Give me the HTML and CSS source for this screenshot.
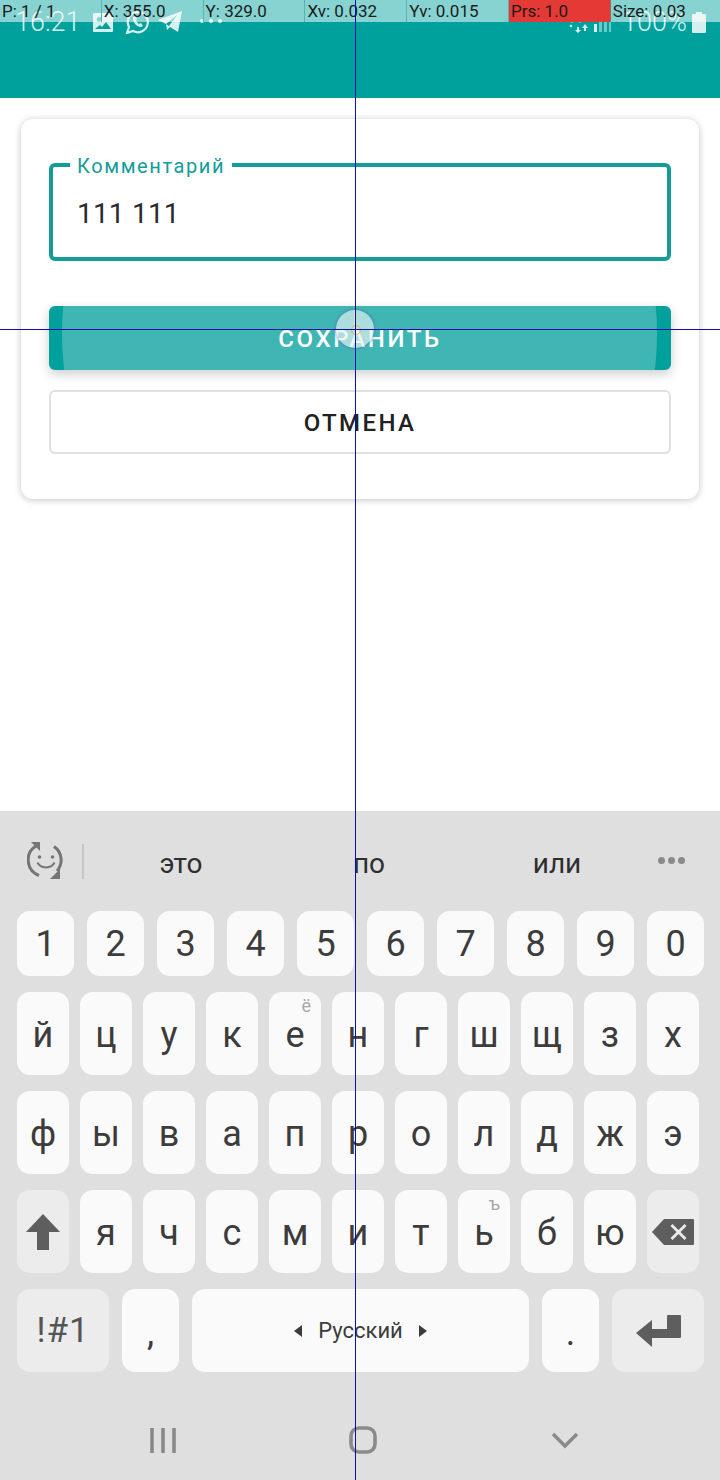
FILE: index.html
```html
<!DOCTYPE html>
<html lang="ru">
<head>
  <meta charset="utf-8"/>
  <link rel="stylesheet" href="styles.css">
</head>
<body>
  <div class="screen">
    <header class="app-header">
      <div class="status-bar">
        <span class="clock">16:21</span>
        <svg class="st-icon st-pic" viewBox="0 0 20 19"><path d="M1 0h18a1 1 0 0 1 1 1v17a1 1 0 0 1-1 1H1a1 1 0 0 1-1-1V1a1 1 0 0 1 1-1zm5 4a2.400 2.400 0 1 0 0 4.800A2.400 2.400 0 0 0 6 4zM2 16h16l-5-7-4 5-2-2z" fill-rule="evenodd"/></svg>
        <svg class="st-icon st-wa" viewBox="0 0 24 24"><path class="st-line" d="M2 23l2-6a10 10 0 1 1 4 4z"/><path d="M8 7l2-1 2 3-1 2 3 3 2-1 2 3-2 1c-4 0-9-5-8-10z"/></svg>
        <svg class="st-icon st-tg" viewBox="0 0 24 22"><path d="M24 0l-4 21-8-5-3 3-1-6L0 9zM8 13l11-9-8 11z" fill-rule="evenodd"/></svg>
        <span class="st-dots"><i></i><i></i><i></i></span>
        <span class="st-spacer"></span>
        <svg class="st-icon st-wifi" viewBox="0 0 22 21"><path class="st-line" d="M1 7a13 13 0 0 1 18 0M5 10a8 8 0 0 1 10 0"/><circle cx="5" cy="14" r="1.300"/><path d="M11 15h2v3h2l-3 3-3-3h2zM18 19h2v-3h2l-3-4-3 4h2z"/></svg>
        <svg class="st-icon st-signal" viewBox="0 0 18 20"><rect x="0" y="11" width="3" height="8"/><rect class="st-dim" x="5" y="8" width="3" height="11"/><rect class="st-dim" x="10" y="4" width="3" height="15"/><rect class="st-dim" x="15" y="1" width="2" height="18"/></svg>
        <span class="battery-text">100%</span>
        <svg class="st-icon st-batt" viewBox="0 0 14 21"><path d="M4 0h6v2h3a1 1 0 0 1 1 1v17a1 1 0 0 1-1 1H1a1 1 0 0 1-1-1V3a1 1 0 0 1 1-1h3z"/></svg>
      </div>
    </header>

    <main class="content">
      <section class="card">
        <div class="field">
          <span class="field-label">Комментарий</span>
          <span class="field-value">111 111</span>
        </div>
        <button class="btn btn-save"><span class="ripple"></span><span class="btn-text">СОХРАНИТЬ</span></button>
        <button class="btn btn-cancel"><span class="btn-text">ОТМЕНА</span></button>
      </section>
    </main>

    <section class="keyboard">
      <div class="suggestions">
        <svg class="sg-icon" viewBox="0 0 38 38">
          <path class="sg-line" d="M9 4A16.500 16.500 0 0 0 12 33.500M27 4.500A16.500 16.500 0 0 1 30 29"/>
          <path class="sg-fill" d="M4 0h9v9zM33 27v10h-10z"/>
          <circle class="sg-fill" cx="12.500" cy="15" r="1.800"/>
          <circle class="sg-fill" cx="25.500" cy="15" r="1.800"/>
          <path class="sg-thin" d="M10.500 20.500c3 6.500 14 6.500 17 0"/>
        </svg>
        <span class="sg-divider"></span>
        <span class="sg-word">это</span>
        <span class="sg-word">по</span>
        <span class="sg-word">или</span>
        <span class="sg-dots"><i></i><i></i><i></i></span>
      </div>

      <div class="key-row">
        <span class="key key-num">1</span><span class="key key-num">2</span><span class="key key-num">3</span><span class="key key-num">4</span><span class="key key-num">5</span><span class="key key-num">6</span><span class="key key-num">7</span><span class="key key-num">8</span><span class="key key-num">9</span><span class="key key-num">0</span>
      </div>
      <div class="key-row row-letters">
        <span class="key">й</span><span class="key">ц</span><span class="key">у</span><span class="key">к</span><span class="key">е<em class="hint">ё</em></span><span class="key">н</span><span class="key">г</span><span class="key">ш</span><span class="key">щ</span><span class="key">з</span><span class="key">х</span>
      </div>
      <div class="key-row row-letters">
        <span class="key">ф</span><span class="key">ы</span><span class="key">в</span><span class="key">а</span><span class="key">п</span><span class="key">р</span><span class="key">о</span><span class="key">л</span><span class="key">д</span><span class="key">ж</span><span class="key">э</span>
      </div>
      <div class="key-row row-letters">
        <span class="key key-fn">
          <svg class="ic-shift" viewBox="0 0 34 36"><path d="M17 0l17 18H23v18H11V18H0z"/></svg>
        </span>
        <span class="key">я</span><span class="key">ч</span><span class="key">с</span><span class="key">м</span><span class="key">и</span><span class="key">т</span><span class="key">ь<em class="hint">ъ</em></span><span class="key">б</span><span class="key">ю</span>
        <span class="key key-fn">
          <svg class="ic-back" viewBox="0 0 42 26"><path d="M12 0h29a1 1 0 0 1 1 1v24a1 1 0 0 1-1 1H12L0 13zm6.500 7l6 6-6 6 2 2 6-6 6 6 2-2-6-6 6-6-2-2-6 6-6-6z" fill-rule="evenodd"/></svg>
        </span>
      </div>
      <div class="key-row row-bottom">
        <span class="key key-fn key-sym">!#1</span>
        <span class="key key-num key-punct">,</span>
        <span class="key key-space"><i class="tri tri-left"></i>Русский<i class="tri tri-right"></i></span>
        <span class="key key-num key-punct">.</span>
        <span class="key key-fn key-enter">
          <svg class="ic-enter" viewBox="0 0 45 32"><path d="M31 1a1 1 0 0 1 1-1h12a1 1 0 0 1 1 1v21a1 1 0 0 1-1 1H16v9L0 18 16 5v9h15z"/></svg>
        </span>
      </div>

      <nav class="nav-bar">
        <span class="nav-item"><svg class="nav-recents" viewBox="0 0 26 27"><path d="M2 1v25M13 1v25M24 1v25"/></svg></span>
        <span class="nav-item"><svg class="nav-home" viewBox="0 0 28 28"><rect x="2" y="2" width="24" height="24" rx="8"/></svg></span>
        <span class="nav-item"><svg class="nav-back" viewBox="0 0 28 17"><path d="M2 2l12 12L26 2"/></svg></span>
      </nav>
    </section>

    <!-- pointer location overlay -->
    <div class="pointer-bar">
      <span class="pb-cell">P: 1 / 1</span>
      <span class="pb-cell">X: 355.0</span>
      <span class="pb-cell">Y: 329.0</span>
      <span class="pb-cell">Xv: 0.032</span>
      <span class="pb-cell">Yv: 0.015</span>
      <span class="pb-cell pb-red">Prs: 1.0</span>
      <span class="pb-cell pb-last">Size: 0.03</span>
    </div>
    <div class="touch-dot"></div>
    <div class="cross-v"></div>
    <div class="cross-h"></div>
  </div>
</body>
</html>
```

FILE: styles.css
```css
* { box-sizing: border-box; }
html, body {
  margin: 0;
  padding: 0;
  background: #fff;
}
body {
  font-family: Roboto, "Noto Sans", sans-serif;
  color: #212121;
}
.screen {
  position: relative;
  width: 720px;
  height: 1480px;
  overflow: hidden;
  display: flex;
  flex-direction: column;
}

/* header + status bar */
.app-header {
  height: 98px;
  background: #00a19d;
}
.status-bar {
  height: 44px;
  display: flex;
  align-items: center;
  padding: 0 14px 0 15px;
  color: #d4efee;
}
.clock {
  font-size: 27px;
  font-weight: 300;
  width: 78px;
}
.st-icon { fill: #d4efee; display: block; }
.st-line { fill: none; stroke: #d4efee; stroke-width: 2.2; }
.st-dim { opacity: .5; }
.st-pic { width: 20px; height: 19px; }
.st-wa { width: 24px; height: 24px; margin-left: 12px; }
.st-tg { width: 24px; height: 22px; margin-left: 9px; }
.st-dots {
  display: flex;
  gap: 5px;
  margin-left: 18px;
  margin-top: -3px;
}
.st-dots i {
  width: 4px;
  height: 4px;
  border-radius: 50%;
  background: #d4efee;
}
.st-spacer { flex: 1; }
.st-wifi { width: 22px; height: 21px; }
.st-signal { width: 18px; height: 20px; margin-left: 6px; margin-top: 2px; }
.battery-text {
  font-size: 27px;
  font-weight: 300;
  margin-left: 10px;
}
.st-batt { width: 14px; height: 21px; margin-left: 5px; }

/* form card */
.content { flex: 1; }
.card {
  margin: 21px 21px 0;
  padding: 44px 28px 45px;
  background: #fff;
  border-radius: 12px;
  box-shadow: 0 1px 7px rgba(0, 0, 0, .24);
}
.field {
  position: relative;
  height: 98px;
  border: 4px solid #129c9a;
  border-radius: 6px;
  padding: 0 24px;
  display: flex;
  align-items: center;
}
.field-label {
  position: absolute;
  left: 17px;
  top: -13px;
  padding: 0 7px;
  background: #fff;
  color: #129c9a;
  font-size: 20px;
  line-height: 24px;
  letter-spacing: 1.6px;
}
.field-value {
  font-size: 28px;
  letter-spacing: .2px;
  color: #2b2b2b;
  margin-top: 3px;
}
.btn {
  position: relative;
  display: block;
  width: 100%;
  height: 64px;
  border-radius: 6px;
  font-family: inherit;
  font-size: 24px;
  letter-spacing: 2.600px;
  overflow: hidden;
  padding: 0;
}
.btn-save {
  margin-top: 45px;
  border: 0;
  background: #00a19d;
  color: #fff;
  font-weight: 500;
  box-shadow: 0 4px 12px rgba(0, 0, 0, .2);
  overflow: visible;
}
.btn-save .ripple {
  position: absolute;
  inset: 0;
  border-radius: 6px;
  overflow: hidden;
}
.btn-save .ripple::before {
  content: "";
  position: absolute;
  left: 13px;
  top: -270px;
  width: 595px;
  height: 595px;
  border-radius: 50%;
  background: #40b6b4;
}
.btn-text { position: relative; top: 1px; }
.btn-cancel {
  margin-top: 20px;
  border: 2px solid #e0e0e0;
  background: #fff;
  color: #212121;
  font-weight: 500;
  letter-spacing: 2.400px;
}

/* keyboard */
.keyboard {
  height: 669px;
  background: #dfdfdf;
}
.suggestions {
  height: 100px;
  display: flex;
  align-items: center;
  padding-left: 27px;
}
.sg-icon { width: 38px; height: 38px; flex: none; }
.sg-line { fill: none; stroke: #757575; stroke-width: 3; }
.sg-thin { fill: none; stroke: #757575; stroke-width: 2; }
.sg-fill { fill: #757575; }
.sg-divider {
  width: 2px;
  height: 35px;
  margin: 0 3px 0 17px;
  background: #c6c6c6;
}
.sg-word {
  width: 188px;
  text-align: center;
  font-size: 28px;
  color: #2e2e2e;
  margin-top: 5px;
}
.sg-dots {
  display: flex;
  gap: 3px;
  margin-left: 7px;
  margin-top: -2px;
}
.sg-dots i {
  width: 7px;
  height: 7px;
  border-radius: 50%;
  background: #8a8a8a;
}
.key-row {
  display: flex;
  gap: 13px;
  padding-left: 17px;
  margin-bottom: 16px;
}
.row-letters { gap: 11px; }
.key {
  position: relative;
  width: 52px;
  height: 83px;
  border-radius: 13px;
  background: #fafafa;
  color: #3c3c3c;
  font-size: 36px;
  display: flex;
  align-items: center;
  justify-content: center;
}
.row-letters .key { padding-top: 3px; }
.row-letters .key-fn { padding-top: 0; }
.key-num { width: 57px; }
.key-row:not(.row-letters):not(.row-bottom) .key { height: 65px; }
.key-fn { background: #ececec; }
.key-sym { width: 92px; font-size: 35px; letter-spacing: 1px; color: #555; }
.key-enter { width: 92px; }
.key-punct { font-size: 36px; padding-top: 4px; }
.key-space {
  width: 337px;
  font-size: 22px;
  gap: 16px;
}
.hint {
  position: absolute;
  top: 4px;
  right: 10px;
  font-style: normal;
  font-size: 18px;
  line-height: 20px;
  color: #a8a8a8;
}
.tri {
  width: 0;
  height: 0;
  border-top: 6px solid transparent;
  border-bottom: 6px solid transparent;
}
.tri-left { border-right: 8px solid #3c3c3c; }
.tri-right { border-left: 8px solid #3c3c3c; }
.ic-shift { width: 34px; height: 36px; fill: #5e5e5e; }
.ic-back { width: 42px; height: 26px; fill: #5e5e5e; }
.ic-enter { width: 45px; height: 32px; fill: #5e5e5e; }

.nav-bar {
  display: flex;
  padding: 37px 0 0 62px;
}
.nav-item {
  width: 201px;
  height: 30px;
  display: flex;
  align-items: center;
  justify-content: center;
}
.nav-item svg { fill: none; stroke: #8a8a8a; display: block; }
.nav-recents { width: 26px; height: 27px; stroke-width: 3.600; }
.nav-home { width: 28px; height: 28px; stroke-width: 3.600; margin-right: 2px; }
.nav-back { width: 28px; height: 17px; stroke-width: 3.400; }

/* pointer location overlay */
.pointer-bar {
  position: absolute;
  top: 0;
  left: 0;
  width: 720px;
  height: 22px;
  display: flex;
  background: rgba(255, 255, 255, .53);
  color: #1a1a1a;
  font-size: 17px;
  line-height: 22px;
}
.pb-cell {
  width: 101.800px;
  padding-left: 2px;
  border-right: 1px solid #4fb8b5;
  white-space: nowrap;
}
.pb-red { background: #e53935; border-right-color: #8f6a68; }
.pb-last { flex: 1; border-right: 0; }
.touch-dot {
  position: absolute;
  left: 336px;
  top: 310px;
  width: 38px;
  height: 38px;
  border-radius: 50%;
  background: rgba(225, 240, 240, .68);
  box-shadow: 0 0 3px 1px rgba(80, 100, 180, .5);
}
.touch-dot::before {
  content: "";
  position: absolute;
  left: 18px;
  top: 0;
  width: 1px;
  height: 19px;
  background: #f3e3a8;
}
.touch-dot::after {
  content: "";
  position: absolute;
  left: 15px;
  top: 15px;
  width: 8px;
  height: 8px;
  border-radius: 50%;
  border: 1px solid #e8b850;
}
.cross-v {
  position: absolute;
  left: 355px;
  top: 0;
  width: 1px;
  height: 1480px;
  background: #1010a8;
}
.cross-h {
  position: absolute;
  left: 0;
  top: 329px;
  width: 720px;
  height: 1px;
  background: #1010a8;
}
```
